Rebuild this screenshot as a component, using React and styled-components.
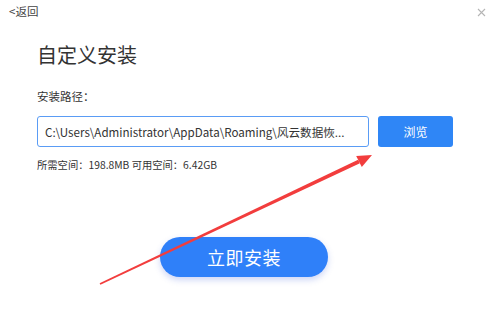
import React from 'react';
import styled, { createGlobalStyle } from 'styled-components';

const GlobalStyle = createGlobalStyle`
  html, body {
    margin: 0;
    padding: 0;
    background: #fff;
  }
  body {
    font-family: "Noto Sans CJK SC", "Noto Sans", "Liberation Sans", sans-serif;
  }
`;

const Window = styled.div`
  position: relative;
  width: 493px;
  height: 324px;
  background: #fff;
  overflow: hidden;
`;

const TopBar = styled.div`
  display: flex;
  justify-content: space-between;
  align-items: center;
  padding: 4px 7px 0 9px;
  height: 14px;
`;

const BackLink = styled.span`
  font-size: 11.5px;
  line-height: 12px;
  color: #444;
  cursor: pointer;
`;

const CloseButton = styled.span`
  display: flex;
  width: 9px;
  height: 9px;
  margin-top: 2px;
  cursor: pointer;
`;

const Content = styled.div`
  padding: 26px 0 0 37px;
`;

const Title = styled.h1`
  margin: 0;
  font-size: 20px;
  line-height: 22px;
  font-weight: 400;
  color: #333;
`;

const Label = styled.div`
  margin-top: 24px;
  font-size: 11.5px;
  line-height: 13px;
  color: #333;
`;

const PathRow = styled.div`
  display: flex;
  gap: 9px;
  margin-top: 13px;
`;

const PathInput = styled.div`
  box-sizing: border-box;
  width: 332px;
  height: 31px;
  padding: 0 7px;
  display: flex;
  align-items: center;
  border: 1px solid #5a9cf5;
  border-radius: 3px;
  font-size: 11.6px;
  color: #333;
  white-space: nowrap;
  overflow: hidden;
`;

const BrowseButton = styled.button`
  width: 75px;
  height: 31px;
  border: none;
  border-radius: 3px;
  background: #2f86f6;
  color: #fff;
  font-family: inherit;
  font-size: 12px;
  cursor: pointer;
`;

const SpaceInfo = styled.div`
  margin-top: 11px;
  font-size: 10.3px;
  line-height: 13px;
  color: #333;
`;

const Footer = styled.div`
  display: flex;
  justify-content: center;
  padding: 66px 5px 0 0;
`;

const InstallButton = styled.button`
  width: 168px;
  height: 40px;
  border: none;
  border-radius: 20px;
  background: #2f80f9;
  color: #fff;
  font-family: inherit;
  font-size: 18px;
  letter-spacing: 0.5px;
  box-shadow: 0 3px 6px rgba(60, 90, 220, 0.25);
  cursor: pointer;
`;

const ArrowOverlay = styled.svg`
  position: absolute;
  left: 0;
  top: 0;
  pointer-events: none;
`;

const Arrow = () => (
  <ArrowOverlay width="493" height="324" viewBox="0 0 493 324">
    <polygon
      points="100.4,284.7 99.6,283.3 358.1,159.7 359.9,163.3"
      fill="#f23d3d"
    />
    <polygon points="372,155 356.2,156 361.8,167" fill="#f23d3d" />
  </ArrowOverlay>
);

const CloseIcon = () => (
  <svg width="9" height="9" viewBox="0 0 9 9">
    <path d="M1 1L8 8M8 1L1 8" stroke="#b5b5b5" strokeWidth="1.1" />
  </svg>
);

export default function App() {
  return (
    <>
      <GlobalStyle />
      <Window>
        <TopBar>
          <BackLink>&lt;返回</BackLink>
          <CloseButton>
            <CloseIcon />
          </CloseButton>
        </TopBar>
        <Content>
          <Title>自定义安装</Title>
          <Label>安装路径：</Label>
          <PathRow>
            <PathInput>C:\Users\Administrator\AppData\Roaming\风云数据恢...</PathInput>
            <BrowseButton>浏览</BrowseButton>
          </PathRow>
          <SpaceInfo>所需空间：198.8MB 可用空间：6.42GB</SpaceInfo>
        </Content>
        <Footer>
          <InstallButton>立即安装</InstallButton>
        </Footer>
        <Arrow />
      </Window>
    </>
  );
}
